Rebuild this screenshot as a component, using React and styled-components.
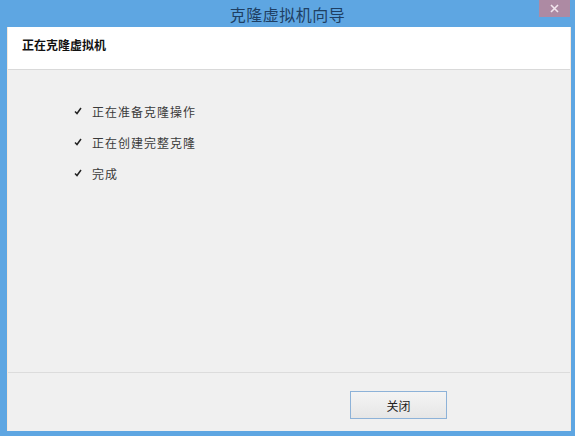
import React from "react";
import styled, { createGlobalStyle } from "styled-components";

const GlobalStyle = createGlobalStyle`
  html, body {
    margin: 0;
    padding: 0;
    background: #5ea6e2;
  }
  body {
    font-family: "Microsoft YaHei", "Noto Sans CJK SC", "Noto Sans", sans-serif;
  }
`;

const Frame = styled.div`
  width: 575px;
  height: 436px;
  box-sizing: border-box;
  background: #5ea6e2;
  display: flex;
  flex-direction: column;
  padding: 0 4px 5px 7px;
`;

const TitleBar = styled.div`
  height: 27px;
  position: relative;
  display: flex;
  align-items: center;
  justify-content: center;
  margin-left: -7px;
  margin-right: -4px;
`;

const Title = styled.div`
  font-size: 16px;
  color: #1e3f63;
  letter-spacing: 0.5px;
  line-height: 1;
`;

const CloseButton = styled.div`
  position: absolute;
  top: 0;
  right: 5px;
  width: 31px;
  height: 17px;
  background: #ad8aa3;
  display: flex;
  align-items: center;
  justify-content: center;
`;

const Window = styled.div`
  flex: 1;
  display: flex;
  flex-direction: column;
  background: #f0f0f0;
  border-left: 1px solid #f6e9dc;
  border-right: 1px solid #f6e9dc;
`;

const Header = styled.div`
  height: 43px;
  box-sizing: border-box;
  background: #ffffff;
  border-bottom: 1px solid #d9d9d9;
  display: flex;
  align-items: flex-start;
  padding: 9px 0 0 14px;
  font-size: 12px;
  line-height: 17px;
  font-weight: bold;
  color: #111;
`;

const Body = styled.div`
  flex: 1;
  padding: 32px 0 0 66px;
  display: flex;
  flex-direction: column;
  gap: 13px;
  border-bottom: 1px solid #dcdcdc;
`;

const Step = styled.div`
  display: flex;
  align-items: center;
  height: 18px;
  font-size: 12px;
  color: #3a3a3a;
  letter-spacing: 1px;
`;

const Check = styled.span`
  width: 18px;
  display: inline-flex;
`;

const Footer = styled.div`
  height: 58px;
  box-sizing: border-box;
  display: flex;
  align-items: flex-start;
  justify-content: flex-end;
  padding: 18px 123px 0 0;
`;

const Button = styled.div`
  width: 97px;
  height: 28px;
  box-sizing: border-box;
  border: 1px solid #8db2d8;
  background: linear-gradient(#f4f4f4, #e6e6e6);
  display: flex;
  align-items: center;
  justify-content: center;
  font-size: 12px;
  color: #222;
`;

const steps = ["正在准备克隆操作", "正在创建完整克隆", "完成"];

export default function App() {
  return (
    <>
      <GlobalStyle />
      <Frame>
        <TitleBar>
          <Title>克隆虚拟机向导</Title>
          <CloseButton>
            <svg width="9" height="9" viewBox="0 0 9 9">
              <path d="M1 1L8 8M8 1L1 8" stroke="#f2e6ee" strokeWidth="1.6" />
            </svg>
          </CloseButton>
        </TitleBar>
        <Window>
          <Header>正在克隆虚拟机</Header>
          <Body>
            {steps.map((s) => (
              <Step key={s}>
                <Check>
                  <svg width="8" height="8" viewBox="0 0 8 8">
                    <path d="M1 4.5L3 6.5L7 1" stroke="#222" strokeWidth="1.5" fill="none" />
                  </svg>
                </Check>
                {s}
              </Step>
            ))}
          </Body>
          <Footer>
            <Button>关闭</Button>
          </Footer>
        </Window>
      </Frame>
    </>
  );
}
